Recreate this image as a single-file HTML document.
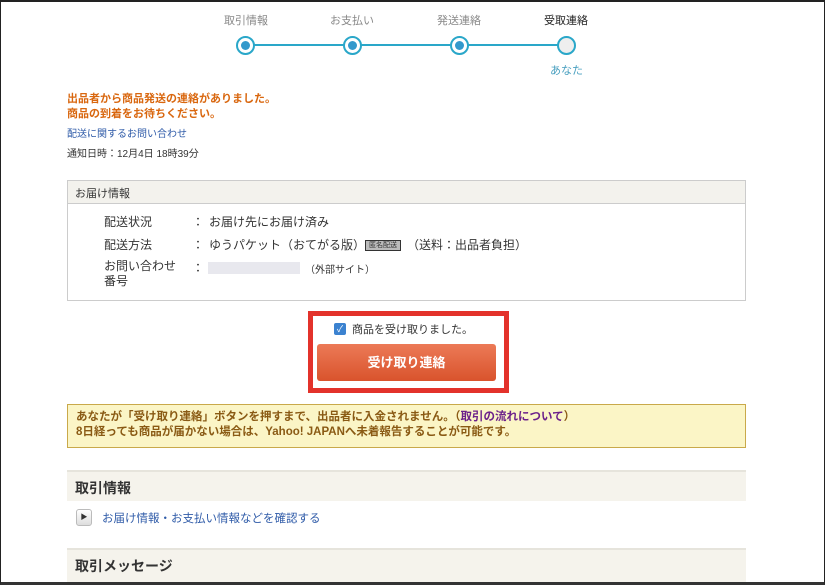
<!DOCTYPE html>
<html><head><meta charset="utf-8"><style>
*{margin:0;padding:0;box-sizing:border-box}
body{width:825px;height:585px;overflow:hidden;background:#fff;font-family:"Liberation Sans","Noto Sans CJK JP",sans-serif;color:#333;position:relative}
.frame{position:absolute;left:0;top:0;width:825px;height:585px;border:1px solid #222;border-top:2px solid #222;border-bottom:3px solid #333}
.a{position:absolute;white-space:nowrap}
.lbl{font-size:11px;color:#888;top:12px;width:80px;text-align:center}
.c{position:absolute;top:36px;width:19px;height:19px;border:2px solid #2aa7c9;border-radius:50%;background:#fff}
.c i{position:absolute;left:3px;top:3px;width:9px;height:9px;border-radius:50%;background:#3399cc}
.box{position:absolute;left:67px;top:180px;width:679px;height:121px;border:1px solid #ccc}
.row{font-size:12px;color:#333}
</style></head><body>
<div class="a lbl" style="left:206px">取引情報</div>
<div class="a lbl" style="left:312px">お支払い</div>
<div class="a lbl" style="left:419px">発送連絡</div>
<div class="a lbl" style="left:526px;color:#222">受取連絡</div>
<div class="a" style="left:246px;top:44px;width:320px;height:2px;background:#2aa7c9"></div>
<div class="c" style="left:236px"><i></i></div>
<div class="c" style="left:343px"><i></i></div>
<div class="c" style="left:450px"><i></i></div>
<div class="c" style="left:557px;background:#eee"></div>
<div class="a" style="left:550px;top:62px;font-size:11px;color:#4aa0c0">あなた</div>
<div class="a" style="left:67px;top:92px;font-size:11px;font-weight:bold;color:#d9670f;line-height:15px">出品者から商品発送の連絡がありました。<br>商品の到着をお待ちください。</div>
<div class="a" style="left:67px;top:125px;font-size:10px;color:#2f5ba8">配送に関するお問い合わせ</div>
<div class="a" style="left:67px;top:145px;font-size:10px;color:#333">通知日時：12月4日 18時39分</div>
<div class="box">
<div style="height:23px;background:#f3f2ed;border-bottom:1px solid #ccc;font-size:11px;padding:4px 7px">お届け情報</div>
</div>
<div class="a row" style="left:104px;top:213px">配送状況</div>
<div class="a row" style="left:192px;top:213px">：</div>
<div class="a row" style="left:209px;top:213px">お届け先にお届け済み</div>
<div class="a row" style="left:104px;top:236px">配送方法</div>
<div class="a row" style="left:192px;top:236px">：</div>
<div class="a row" style="left:209px;top:236px">ゆうパケット（おてがる版）</div>
<div class="a" style="left:365px;top:240px;width:36px;height:11px;border:1px solid #333;background:#bbb;font-size:7px;line-height:9px;text-align:center">匿名配送</div>
<div class="a row" style="left:407px;top:236px">（送料：出品者負担）</div>
<div class="a row" style="left:104px;top:259px;line-height:15px">お問い合わせ<br>番号</div>
<div class="a row" style="left:192px;top:259px">：</div>
<div class="a" style="left:208px;top:262px;width:92px;height:12px;background:#e8e8ee"></div>
<div class="a" style="left:305px;top:261px;font-size:10px">（外部サイト）</div>
<div class="a" style="left:308px;top:311px;width:201px;height:82px;border:5px solid #e3322b"></div>
<div class="a" style="left:334px;top:323px;width:12px;height:12px;border-radius:2px;background:#3b82d0;color:#fff;font-size:9px;line-height:12px;text-align:center">✓</div>
<div class="a" style="left:352px;top:321px;font-size:11px;color:#333">商品を受け取りました。</div>
<div class="a" style="left:317px;top:344px;width:179px;height:37px;border-radius:3px;background:linear-gradient(#ec7a57,#d9532c);color:#fff;font-weight:bold;font-size:13px;text-align:center;line-height:37px">受け取り連絡</div>
<div class="a" style="left:67px;top:404px;width:679px;height:44px;background:#fbf5c6;border:1px solid #c9a94a;font-size:11.5px;font-weight:bold;color:#8a5a14;padding:5px 8px;line-height:15px">あなたが「受け取り連絡」ボタンを押すまで、出品者に入金されません。（<span style="color:#6b1f8a">取引の流れについて</span>）<br>8日経っても商品が届かない場合は、Yahoo! JAPANへ未着報告することが可能です。</div>
<div class="a" style="left:67px;top:470px;width:679px;height:31px;background:#f5f3ec;border-top:2px solid #e6e4dc;font-size:14px;font-weight:bold;color:#333;padding:6px 8px">取引情報</div>
<div class="a" style="left:76px;top:509px;width:16px;height:17px;border:1px solid #bbb;border-radius:3px;background:linear-gradient(#fff,#ddd);font-size:7px;line-height:15px;text-align:center;color:#333">▶</div>
<div class="a" style="left:102px;top:510px;font-size:11.5px;color:#2f5ba8">お届け情報・お支払い情報などを確認する</div>
<div class="a" style="left:67px;top:548px;width:679px;height:35px;background:#f5f3ec;border-top:2px solid #e6e4dc;font-size:14px;font-weight:bold;color:#333;padding:6px 8px">取引メッセージ</div>
<div class="frame"></div>
</body></html>
